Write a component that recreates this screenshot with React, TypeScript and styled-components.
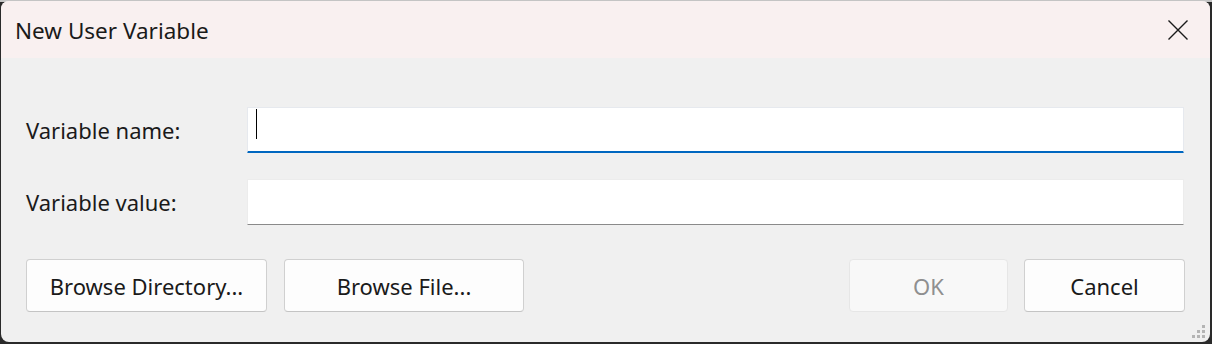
import styled, { createGlobalStyle } from "styled-components";

const Global = createGlobalStyle`
  html, body {
    margin: 0;
    padding: 0;
  }
  body {
    width: 1212px;
    height: 344px;
    overflow: hidden;
    background: linear-gradient(#c4c4c4 0 2px, #2a2a2a 2px);
    font-family: "Noto Sans", "Open Sans", sans-serif;
  }
`;

const Window = styled.div`
  width: 1209px;
  height: 341px;
  margin: 1px 0 0 1px;
  border-radius: 8px;
  overflow: hidden;
  background: #f0f0f0;
  display: flex;
  flex-direction: column;
  position: relative;
`;

const TitleBar = styled.div`
  height: 57px;
  background: #f9f0f0;
  display: flex;
  align-items: center;
  justify-content: space-between;
  padding: 0 0 0 14px;
`;

const Title = styled.span`
  font-size: 22.5px;
  color: #1a1a1a;
  padding-top: 1px;
`;

const CloseButton = styled.div`
  width: 64px;
  height: 57px;
  display: flex;
  align-items: center;
  justify-content: center;
`;

const Body = styled.div`
  flex: 1;
  padding: 49px 25px 0 25px;
  display: flex;
  flex-direction: column;
`;

const Form = styled.div`
  display: grid;
  grid-template-columns: 221px 1fr;
  row-gap: 26px;
  align-items: center;
`;

const Label = styled.label`
  font-size: 22px;
  color: #1a1a1a;
  padding-bottom: 0;
`;

const Input = styled.div<{ $focused?: boolean }>`
  height: 46px;
  box-sizing: border-box;
  background: #ffffff;
  border: 1px solid ${(p) => (p.$focused ? "#e6e9ee" : "#ececec")};
  border-bottom: ${(p) => (p.$focused ? "2px solid #0067c0" : "1px solid #8a8a8a")};
  border-radius: 1px;
  display: flex;
  align-items: center;
  padding-left: 8px;
  margin-right: 1px;
`;

const Caret = styled.span`
  width: 1px;
  height: 30px;
  margin-bottom: 12px;
  background: #000;
`;

const Buttons = styled.div`
  margin-top: 34px;
  display: flex;
  align-items: center;
`;

const Spacer = styled.div`
  flex: 1;
`;

const Button = styled.button<{ $w: number; $gap?: number }>`
  width: ${(p) => p.$w}px;
  height: 53px;
  margin-left: ${(p) => p.$gap ?? 0}px;
  box-sizing: border-box;
  background: #fdfdfd;
  border: 1px solid #d0d0d0;
  border-bottom-color: #c4c4c4;
  border-radius: 4px;
  font-family: inherit;
  font-size: 22px;
  color: #1a1a1a;
  padding: 1px 0 0 0;
  &:disabled {
    background: #f8f8f8;
    border-color: #e6e6e6;
    color: #8f8f8f;
  }
`;

const Grip = styled.svg`
  position: absolute;
  right: 4px;
  bottom: 3px;
`;

export default function App() {
  return (
    <>
      <Global />
      <Window>
        <TitleBar>
          <Title>New User Variable</Title>
          <CloseButton>
            <svg width="22" height="22" viewBox="0 0 22 22">
              <path d="M1.5 1.5 L20.5 20.5 M20.5 1.5 L1.5 20.5" stroke="#1a1a1a" strokeWidth="1.4" />
            </svg>
          </CloseButton>
        </TitleBar>
        <Body>
          <Form>
            <Label>Variable name:</Label>
            <Input $focused>
              <Caret />
            </Input>
            <Label>Variable value:</Label>
            <Input />
          </Form>
          <Buttons>
            <Button $w={241}>Browse Directory...</Button>
            <Button $w={240} $gap={17}>Browse File...</Button>
            <Spacer />
            <Button $w={159} disabled>OK</Button>
            <Button $w={161} $gap={16}>Cancel</Button>
          </Buttons>
        </Body>
        <Grip width="16" height="16" viewBox="0 0 16 16">
          <g fill="#b4b4b4">
            <rect x="12" y="2" width="3" height="3" />
            <rect x="7" y="7" width="3" height="3" />
            <rect x="12" y="7" width="3" height="3" />
            <rect x="2" y="12" width="3" height="3" />
            <rect x="7" y="12" width="3" height="3" />
            <rect x="12" y="12" width="3" height="3" />
          </g>
        </Grip>
      </Window>
    </>
  );
}
